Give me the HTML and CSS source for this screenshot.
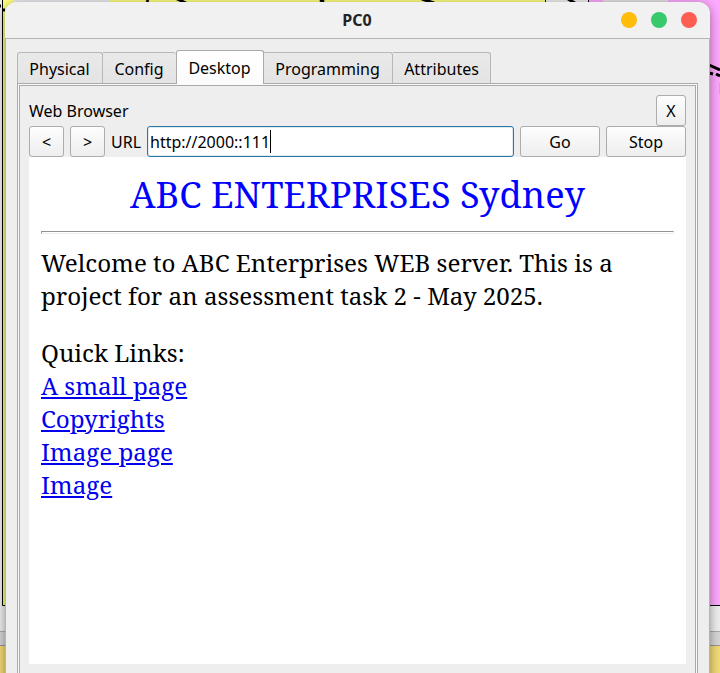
FILE: index.html
```html
<!DOCTYPE html>
<html lang="en">
<head>
<meta charset="utf-8">
<title>PC0</title>
<link rel="stylesheet" href="styles.css">
</head>
<body>
<svg class="canvas" width="720" height="673" viewBox="0 0 720 673" aria-hidden="true">
  <rect width="720" height="673" fill="#f0f0f0"/>
  <rect x="3" width="543" height="605" fill="#ffff80"/>
  <rect x="13" width="96" height="3" fill="#ececf2"/>
  <rect x="589" width="131" height="605" fill="#ffaaff"/>
  <rect x="603" width="65" height="3" fill="#e4e4e4"/>
  <path d="M2.500 0V605.500H720M545.500 0V5M588.500 0V5" fill="none" stroke="#000"/>
  <path d="M0 6h1M3 10h2M147 0l1 2M177 -1l9 4M320 0l4 2M422 -1l12 4M568 -1l7 4" stroke="#000" stroke-width="3"/>
  <path d="M709 65l11 5" stroke="#000" stroke-width="3"/>
  <path d="M709 73l4 1M716 74l4 2" stroke="#000" stroke-width="3"/>
  <rect x="719" y="83" width="1" height="11" fill="#b8b8c8"/>
  <rect y="631" width="720" height="1" fill="#aaa"/>
  <rect y="632" width="720" height="13" fill="#d8d8d8"/>
  <rect y="645" width="720" height="1" fill="#999"/>
  <rect y="646" width="720" height="27" fill="#f5dc78"/>
</svg>
<main class="window">
  <header class="titlebar">
    <h1 class="title">PC0</h1>
    <div class="controls"><i class="dot min"></i><i class="dot max"></i><i class="dot close"></i></div>
  </header>
  <div class="client">
    <nav class="tabs">
      <span class="tab physical">Physical</span><span class="tab config">Config</span><span class="tab desktop">Desktop</span><span class="tab programming">Programming</span><span class="tab attributes">Attributes</span>
    </nav>
    <section class="pane">
      <div class="inner">
        <div class="heading"><span>Web Browser</span><button class="btn x">X</button></div>
        <div class="toolbar">
          <button class="btn nav">&lt;</button><button class="btn nav">&gt;</button>
          <span class="label">URL</span>
          <div class="url"><span>http://2000::111</span><i class="caret"></i></div>
          <button class="btn action">Go</button><button class="btn action">Stop</button>
        </div>
        <article class="page">
          <h2 class="headline">ABC ENTERPRISES Sydney</h2>
          <div class="rule"></div>
          <p class="para">Welcome to ABC Enterprises WEB server. This is a<br>project for an assessment task 2 - May 2025.</p>
          <p class="para">Quick Links:<br><a href="#">A small page</a><br><a href="#">Copyrights</a><br><a href="#">Image page</a><br><a href="#">Image</a></p>
        </article>
      </div>
    </section>
  </div>
</main>
</body>
</html>
```
FILE: styles.css
```css
* { box-sizing: border-box; }
body { margin: 0; width: 720px; height: 673px; overflow: hidden; position: relative; font: 16px/22px "Noto Sans", sans-serif; color: #000; }
.canvas { position: absolute; left: 0; top: 0; }
.window { position: absolute; left: 5px; top: 2px; width: 705px; height: 700px; border-radius: 12px 12px 0 0; background: #eee; box-shadow: 0 2px 12px rgba(0,0,0,.42); overflow: hidden; }
.titlebar { height: 37px; background: #f1f1f1; border-bottom: 1px solid #b4b4b4; display: flex; align-items: center; justify-content: flex-end; padding-right: 13px; }
.title { margin: 0; font-size: 16px; line-height: 36px; color: #232323; width: 100%; padding-left: 88px; text-align: center; }
.controls { display: flex; gap: 14px; }
.dot { width: 16px; height: 16px; border-radius: 50%; }
.min { background: #ffbd0a; }
.max { background: #38c96a; }
.close { background: #ff5f52; }
.client { height: 663px; border: solid #b4b4b4; border-width: 0 1px; padding: 11px 11px 0; }
.tabs { display: flex; align-items: flex-end; height: 33px; }
.tab { height: 31px; border: 1px solid #b7b7b7; border-bottom: 0; border-left: 0; border-radius: 0 3px 0 0; background: linear-gradient(#e9e9e9, #e4e4e4); text-align: center; line-height: 32px; padding-right: 1px; }
.physical { width: 86px; border-left: 1px solid #b7b7b7; border-radius: 3px 3px 0 0; }
.config { width: 73px; border-right: 0; }
.desktop { width: 88px; height: 34px; background: linear-gradient(#fff, #fbfbfb); border: 1px solid #aaa; border-bottom: 0; border-radius: 3px 3px 0 0; position: relative; top: 1px; line-height: 35px; }
.programming { width: 129px; }
.attributes { width: 98px; padding-right: 0; }
.pane { width: 681px; height: 618px; border: 1px solid #aaa; background: #fafafa; padding: 1px; }
.inner { height: 614px; border: 1px solid #aaa; background: #eee; padding: 9px 9px 0; }
.heading { display: flex; height: 31px; justify-content: space-between; align-items: center; }
.btn { height: 31px; padding: 0; font: inherit; color: #000; border: 1px solid #acacac; border-radius: 3px; background: linear-gradient(#fdfdfd, #eee); }
.x { width: 30px; }
.toolbar { display: flex; gap: 6px; height: 31px; align-items: center; }
.nav { width: 35px; }
.label { width: 30px; }
.url { width: 367px; height: 31px; border: 1px solid #2878a5; border-radius: 3px; background: #fff; padding: 3px 2px; display: flex; align-items: center; box-shadow: inset 0 0 0 1px #e0eaf0; }
.caret { width: 1px; height: 23px; background: #000; }
.action { width: 80px; }
.page { width: 657px; height: 507px; background: #fff; padding: 12px; font-family: "Noto Serif", serif; }
.headline { margin: 0; height: 62px; font-size: 36.240px; line-height: 50px; font-weight: 400; color: #00f; text-align: center; }
.rule { height: 3px; border: 1px solid; border-color: #929292 #eee #eee #929292; }
.para { margin: 12px 0 24px; font-size: 24.170px; line-height: 33px; }
a { color: #00e; }
```
